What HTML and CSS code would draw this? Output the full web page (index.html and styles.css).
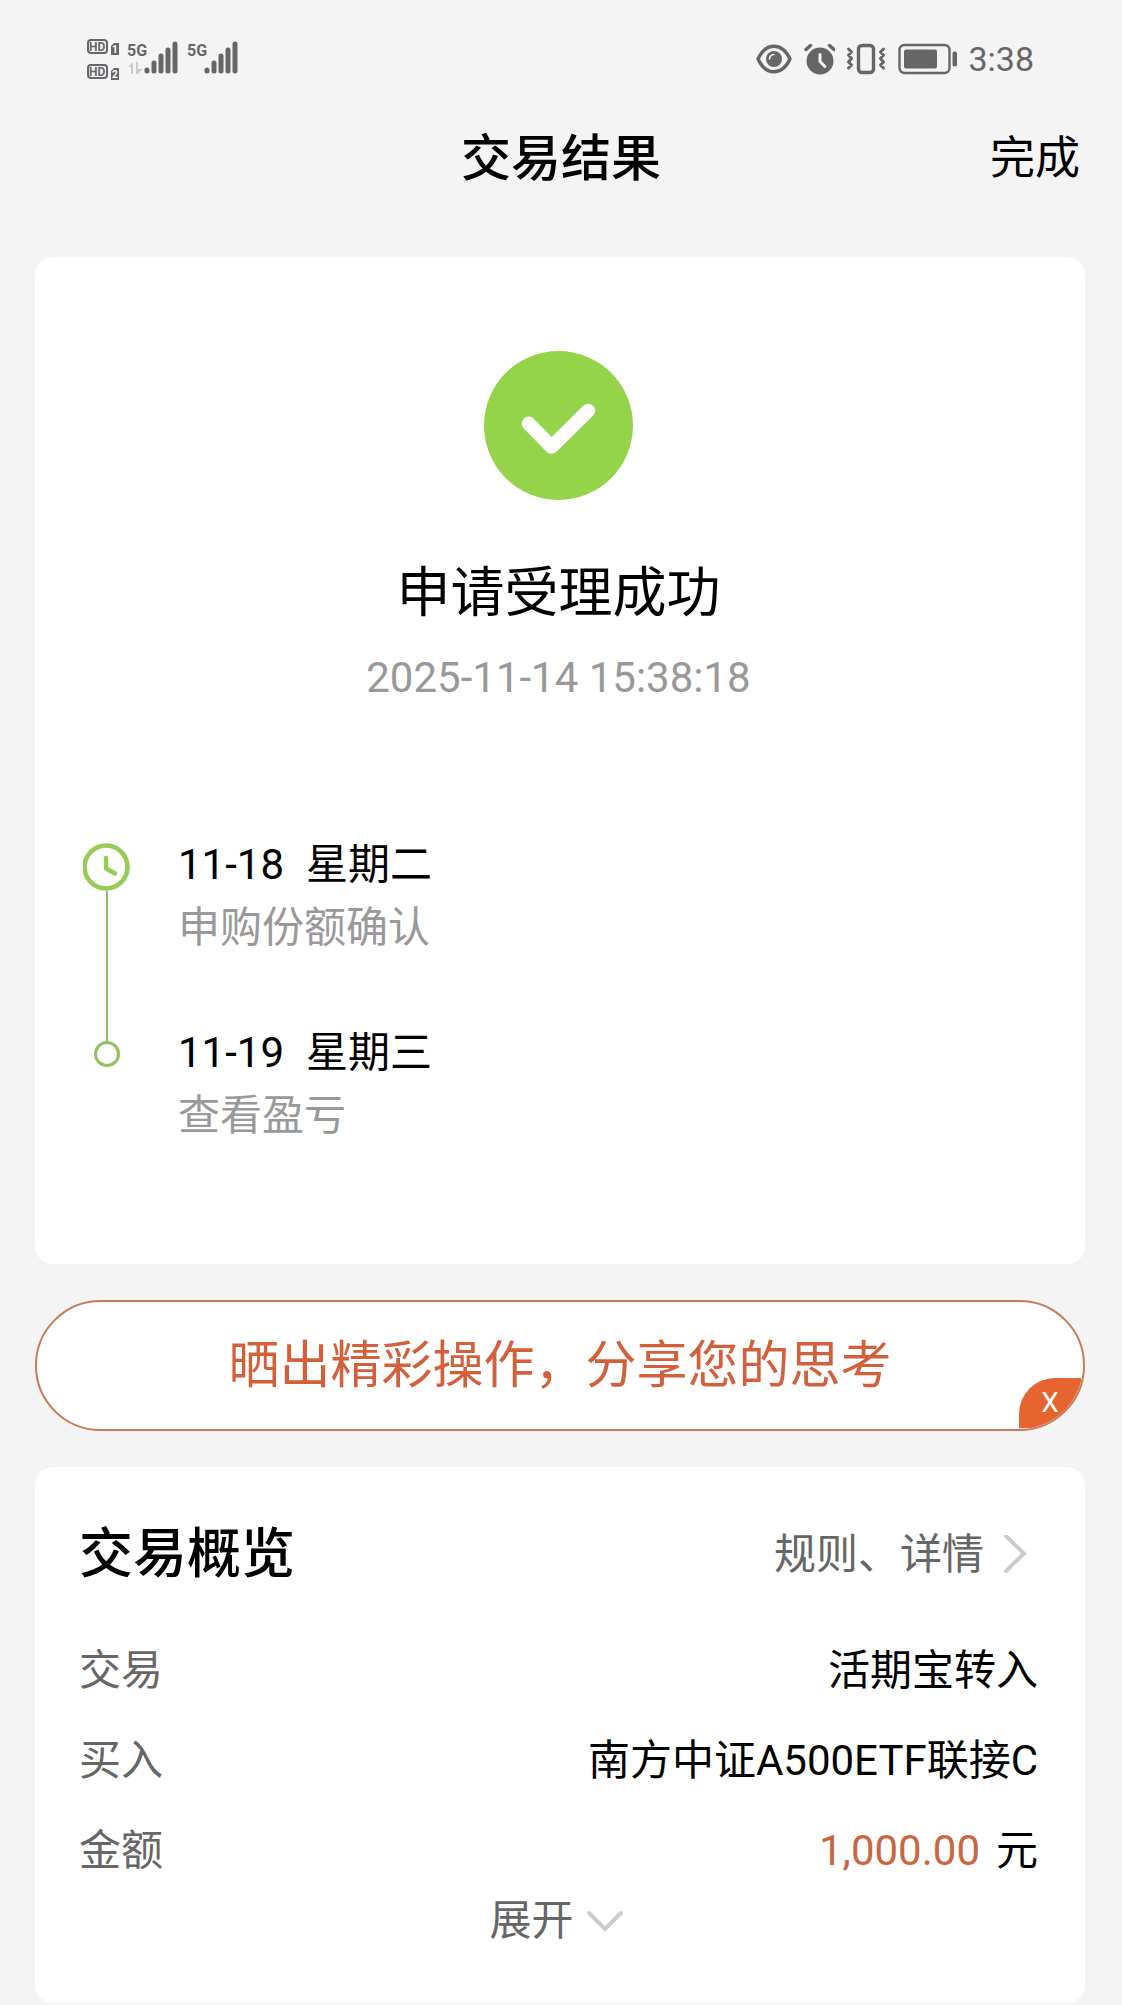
FILE: index.html
```html
<!DOCTYPE html>
<html lang="zh-CN">
  <head>
    <meta charset="utf-8" />
    <title>交易结果</title>
    <meta name="viewport" content="width=device-width, initial-scale=1" />
    <link rel="stylesheet" href="styles.css">
  </head>
  <body>
    <div class="status-bar">
      <svg class="status-icon" width="152" height="44" viewBox="0 0 152 44">
        <g fill="none" stroke="#666" stroke-width="2">
          <rect x="2" y="3" width="19" height="13" rx="3" />
          <rect x="2" y="28" width="19" height="13" rx="3" />
        </g>
        <path d="M28 6h5v12h-8V9zM28 31h5v12h-8v-9z" fill="#666" />
        <g class="hd-text">
          <text x="3" y="14">HD</text>
          <text x="3" y="39">HD</text>
        </g>
        <g class="sim-text">
          <text x="26" y="16">1</text>
          <text x="26" y="41">2</text>
        </g>
        <g class="net-text">
          <text x="41" y="19">5G</text>
          <text x="101" y="19">5G</text>
        </g>
        <path d="M42 30l5-5v12h-2v-7zM50 25h2v7h5l-5 5h-2z" fill="#ccc" />
        <g stroke="#666" stroke-width="5" stroke-linecap="round">
          <path d="M61 33v1M68 26v8M75 19v15M82 13v21M89 7v27" />
          <path d="M121 33v1M128 26v8M135 19v15M142 13v21M149 7v27" />
        </g>
      </svg>
      <div class="status-right">
        <svg class="status-icon" width="36" height="32" viewBox="0 0 36 32">
          <path d="M2 16C10 -1 26 -1 34 16C26 33 10 33 2 16Z" fill="none" stroke="#666" stroke-width="3.400" stroke-linejoin="round" />
          <circle cx="18" cy="16" r="8" fill="#666" />
          <path d="M13.500 16a5 5 0 0 1 4.500-4.500" fill="none" stroke="#f4f4f4" stroke-width="1.600" stroke-linecap="round" />
        </svg>
        <svg class="status-icon" width="32" height="32" viewBox="-1 0 32 32">
          <circle cx="16" cy="18" r="13.500" fill="#666" />
          <path d="M2 6.500L6.500 2.500M30 6.500L25.500 2.500" stroke="#666" stroke-width="3.400" stroke-linecap="round" />
          <path d="M16 11.500v7l5 5" fill="none" stroke="#f4f4f4" stroke-width="3" stroke-linecap="round" stroke-linejoin="round" />
        </svg>
        <svg class="status-icon" width="40" height="32" viewBox="0 0 40 32">
          <rect x="12.500" y="2.500" width="15" height="27" rx="3.500" fill="none" stroke="#666" stroke-width="3.400" />
          <path d="M2.500 6l3 3-3 3 3 3.500-3 3.500 3 3-3 3M37.500 6l-3 3 3 3-3 3.500 3 3.500-3 3 3 3" fill="none" stroke="#666" stroke-width="3" stroke-linecap="round" stroke-linejoin="round" />
        </svg>
        <svg class="status-icon" width="60" height="32" viewBox="-1 0 60 32">
          <rect x="1.500" y="2" width="50" height="28" rx="5" fill="none" stroke="#666" stroke-width="2.400" />
          <rect x="6" y="6.500" width="33" height="19" rx="2" fill="#666" />
          <rect x="54.500" y="8.500" width="4.500" height="15" rx="2" fill="#666" />
        </svg>
        <span class="clock">3:38</span>
      </div>
    </div>

    <header class="nav">
      <h1>交易结果</h1>
      <button type="button" class="done">完成</button>
    </header>

    <main>
      <section class="card result">
        <svg class="result-icon" width="149" height="149" viewBox="0 0 150 150">
          <circle cx="75" cy="75" r="75" fill="#95d44a" />
          <path d="M45 73l23 23.500L105 60" fill="none" stroke="#fff" stroke-width="14" stroke-linecap="round" stroke-linejoin="round" />
        </svg>
        <h2>申请受理成功</h2>
        <time>2025-11-14 15:38:18</time>

        <ol class="timeline">
          <li>
            <div class="rail">
              <svg width="48" height="48" viewBox="0 0 48 48">
                <circle cx="23" cy="24" r="21.500" fill="none" stroke="#95cc55" stroke-width="4.600" />
                <path d="M23 15v10.500l9 5" fill="none" stroke="#95cc55" stroke-width="4.400" stroke-linecap="round" stroke-linejoin="round" />
              </svg>
            </div>
            <div>
              <p class="day"><span>11-18</span><span>星期二</span></p>
              <p class="event">申购份额确认</p>
            </div>
          </li>
          <li>
            <div class="rail"><i class="dot"></i></div>
            <div>
              <p class="day"><span>11-19</span><span>星期三</span></p>
              <p class="event">查看盈亏</p>
            </div>
          </li>
        </ol>
      </section>

      <div class="share">
        <a href="#share">晒出精彩操作，分享您的思考</a>
        <button type="button" class="share-close" aria-label="关闭">X</button>
      </div>

      <section class="card overview">
        <div class="overview-head">
          <h2>交易概览</h2>
          <a href="#rules">
            规则、详情
            <svg width="24" height="40" viewBox="0 0 24 40">
              <path d="M2 1l18 17.500L2 36" fill="none" stroke="#ccc" stroke-width="4" stroke-linecap="round" />
            </svg>
          </a>
        </div>
        <dl>
          <div class="row">
            <dt>交易</dt>
            <dd>活期宝转入</dd>
          </div>
          <div class="row">
            <dt>买入</dt>
            <dd>南方中证A500ETF联接C</dd>
          </div>
          <div class="row">
            <dt>金额</dt>
            <dd><span class="amount">1,000.00</span>元</dd>
          </div>
        </dl>
        <button type="button" class="expand">
          展开
          <svg width="38" height="24" viewBox="0 0 38 24">
            <path d="M3 4l16 16L35 4" fill="none" stroke="#ccc" stroke-width="4" stroke-linecap="round" />
          </svg>
        </button>
      </section>
    </main>
  </body>
</html>
```
FILE: styles.css
```css
* {
  box-sizing: border-box;
  margin: 0;
  padding: 0;
}

body {
  font-family: Roboto, "Noto Sans CJK SC", sans-serif;
  font-size: 42px;
  line-height: 50px;
  color: #000;
  background: #f4f4f4;
}

button {
  font: inherit;
  color: inherit;
  background: none;
  border: none;
  cursor: pointer;
}

a {
  color: inherit;
  text-decoration: none;
}

svg {
  display: block;
  flex: none;
}

/* status bar */
.status-bar {
  display: flex;
  justify-content: space-between;
  align-items: center;
  height: 118px;
  padding: 0 88px 0 86px;
  color: #666;
}

.status-right {
  display: flex;
  align-items: center;
  gap: 11px;
}

.clock {
  font-size: 34px;
}

.hd-text,
.sim-text,
.net-text {
  fill: #666;
  font-family: Roboto, sans-serif;
  font-weight: bold;
}

.hd-text {
  font-size: 12px;
}

.sim-text {
  fill: #fff;
  font-size: 10px;
}

.net-text {
  font-size: 16px;
}

/* title */
.nav {
  display: grid;
  grid-template-columns: 1fr auto 1fr;
  align-items: center;
  height: 82px;
  padding: 0 42px;
}

.nav h1 {
  grid-column: 2;
  font-size: 50px;
  font-weight: 500;
}

.done {
  justify-self: end;
  font-size: 45px;
}

main {
  display: flex;
  flex-direction: column;
  gap: 36px;
  padding: 57px 37px 2px 35px;
}

.card {
  background: #fff;
  border-radius: 18px;
}

/* result */
.result {
  display: flex;
  flex-direction: column;
  align-items: center;
  padding: 94px 48px 117px 45px;
}

.result h2 {
  margin-top: 62px;
  font-size: 54px;
  font-weight: 400;
  line-height: 64px;
}

.result time {
  margin-top: 27px;
  font-size: 42px;
  color: #999;
}

.timeline {
  align-self: stretch;
  margin-top: 130px;
  list-style: none;
  line-height: 63px;
}

.timeline li {
  display: flex;
  gap: 44px;
}

.timeline li:first-child > div:last-child {
  padding-bottom: 62px;
}

.rail {
  display: flex;
  flex-direction: column;
  align-items: center;
  width: 54px;
}

.timeline li:first-child .rail {
  padding-top: 10px;
}

.timeline li:first-child .rail::after,
.timeline li:last-child .rail::before {
  content: "";
  width: 2px;
  background: #8fc163;
}

.timeline li:first-child .rail::after {
  flex: 1;
}

.timeline li:last-child .rail::before {
  height: 20px;
}

.dot {
  width: 26px;
  height: 26px;
  border: 3px solid #8fc163;
  border-radius: 50%;
}

.day {
  display: flex;
  gap: 22px;
}

.event {
  color: #999;
}

/* share banner */
.share {
  position: relative;
  overflow: hidden;
  border: 2px solid #c97a56;
  border-radius: 66px;
  background: #fff;
}

.share a {
  display: block;
  padding: 32px 0 31px;
  font-size: 51px;
  line-height: 64px;
  text-align: center;
  color: #d3603a;
}

.share-close {
  position: absolute;
  right: 2px;
  bottom: 1px;
  width: 62px;
  height: 50px;
  font-size: 28px;
  line-height: 50px;
  color: #fff;
  background: #e66430;
  border-top-left-radius: 36px;
}

/* overview */
.overview {
  padding: 56px 47px 57px 44px;
}

.overview-head {
  display: flex;
  justify-content: space-between;
  align-items: center;
  margin-bottom: 39px;
}

.overview-head h2 {
  font-size: 54px;
  font-weight: 500;
  line-height: 64px;
}

.overview-head a {
  display: flex;
  align-items: center;
  gap: 20px;
  padding-right: 10px;
  color: #666;
}

.row {
  display: flex;
  justify-content: space-between;
  line-height: 90px;
}

.row dt {
  color: #666;
}

.amount {
  margin-right: 16px;
  color: #cb6540;
}

.expand {
  display: flex;
  align-items: center;
  gap: 12px;
  margin: 0 auto;
  padding-right: 4px;
  color: #666;
}
```
